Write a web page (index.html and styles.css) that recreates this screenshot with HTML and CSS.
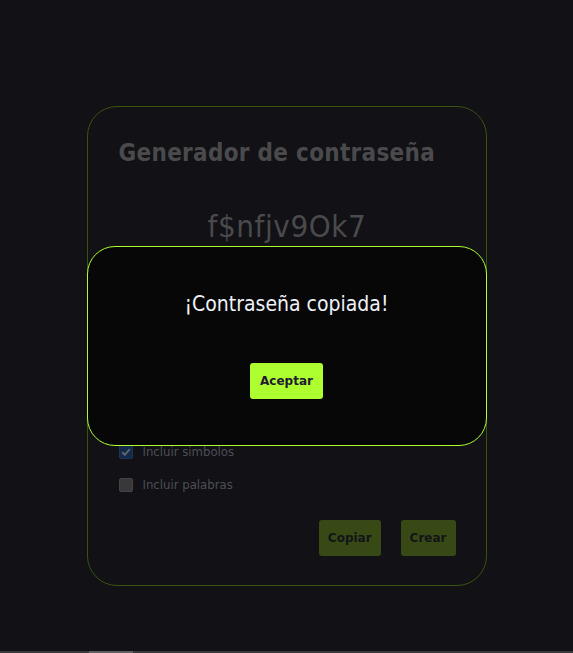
FILE: index.html
```html
<!DOCTYPE html>
<html lang="es">
<head>
<meta charset="utf-8">
<title>Generador de contraseña</title>
<link rel="stylesheet" href="styles.css">
</head>
<body>
<div class="page">
  <main class="stage">
    <section class="card">
      <h1 class="title">Generador de contraseña</h1>
      <div class="password">f$nfjv9Ok7</div>
      <div class="options">
        <label class="option"><span class="box checked"></span><span>Incluir mayúsculas</span></label>
        <label class="option"><span class="box checked"></span><span>Incluir números</span></label>
        <label class="option"><span class="box checked"><svg viewBox="0 0 14 14" width="14" height="14"><path d="M3.2 7.3 L5.8 9.8 L10.8 4.2" fill="none" stroke="#5d6470" stroke-width="2"/></svg></span><span>Incluir simbolos</span></label>
        <label class="option"><span class="box"></span><span>Incluir palabras</span></label>
      </div>
      <div class="actions">
        <button class="btn dim">Copiar</button>
        <button class="btn dim">Crear</button>
      </div>
    </section>
    <div class="modal">
      <p class="modal-text">¡Contraseña copiada!</p>
      <button class="btn accept">Aceptar</button>
    </div>
  </main>
  <div class="hscroll"><div class="thumb"></div></div>
</div>
</body>
</html>
```
FILE: styles.css
```css
* { box-sizing: border-box; }
html, body { margin: 0; padding: 0; }
body {
  background: #111116;
  font-family: "DejaVu Sans Condensed", "DejaVu Sans", sans-serif;
  overflow: hidden;
}
.page {
  height: 653px;
  display: flex;
  flex-direction: column;
}
.stage {
  flex: 1;
  position: relative;
  display: flex;
  justify-content: center;
  padding-top: 106px;
}
.card {
  width: 400px;
  height: 480px;
  border: 1px solid #3a5312;
  border-radius: 30px;
  padding: 30px 30px 0 31px;
  display: flex;
  flex-direction: column;
}
.title {
  margin: 0;
  font-size: 24px;
  font-weight: 700;
  color: #4a4a4c;
  line-height: 32px;
  letter-spacing: 0.3px;
}
.password {
  margin-top: 37px;
  text-align: center;
  font-size: 31px;
  color: #4a4a4c;
  line-height: 40px;
  letter-spacing: 0.6px;
}
.options {
  margin-top: 123px;
  display: flex;
  flex-direction: column;
}
.option {
  height: 33px;
  flex: none;
  display: flex;
  align-items: center;
  gap: 10px;
  font-size: 13px;
  color: #4d4e55;
}
.box {
  width: 14px;
  height: 14px;
  border-radius: 2px;
  background: #38383a;
  border: 1px solid #444446;
  display: flex;
}
.box.checked {
  background: #13294a;
  border-color: #1b3458;
}
.box svg { margin: -1px; }
.actions {
  margin-top: 19px;
  display: flex;
  justify-content: flex-end;
  gap: 20px;
}
.btn {
  font-family: "DejaVu Sans", Verdana, sans-serif;
  font-weight: 700;
  font-size: 12px;
  border: none;
  border-radius: 3px;
  height: 36px;
  padding: 0 9px;
  cursor: pointer;
}
.dim {
  background: #374a16;
  color: #141418;
}
.modal {
  position: absolute;
  left: 50%;
  top: 246px;
  transform: translateX(-50%);
  width: 400px;
  height: 200px;
  background: #070707;
  border: 1px solid #adff2f;
  border-radius: 28px;
  display: flex;
  flex-direction: column;
  align-items: center;
}
.modal-text {
  margin: 43px 0 0;
  font-size: 21px;
  line-height: 28px;
  color: #eef2f8;
}
.accept {
  margin-top: 45px;
  background: #adff2f;
  color: #221a33;
  width: 73px;
  padding: 0;
}
.hscroll {
  height: 2px;
  background: #3a3a3a;
}
.thumb {
  margin-left: 89px;
  width: 44px;
  height: 2px;
  background: #5e5e5e;
}
```
